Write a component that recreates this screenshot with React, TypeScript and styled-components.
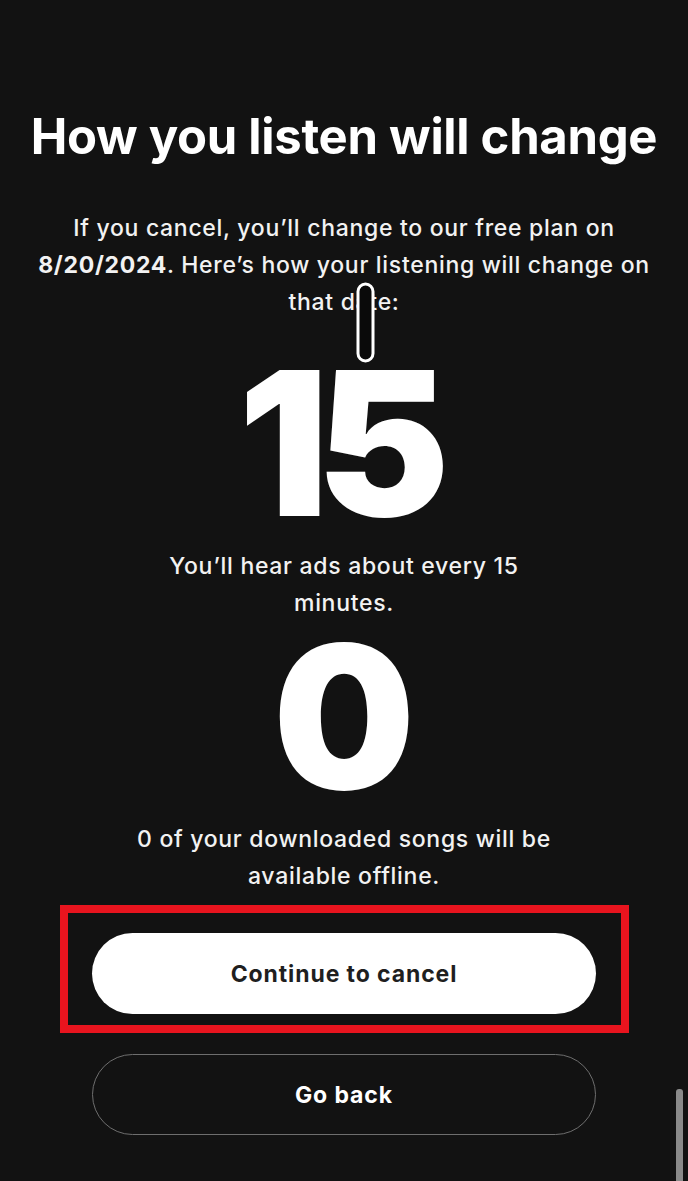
import React from 'react';
import styled, { createGlobalStyle } from 'styled-components';

const GlobalStyle = createGlobalStyle`
  html, body {
    margin: 0;
    padding: 0;
    background: #121212;
  }
  * {
    box-sizing: border-box;
  }
`;

const Screen = styled.div`
  position: relative;
  width: 688px;
  height: 1181px;
  overflow: hidden;
  background: #121212;
  color: #ffffff;
  font-family: 'Inter', 'Noto Sans', sans-serif;
  display: flex;
  flex-direction: column;
  align-items: center;
  padding-top: 108px;
`;

const Title = styled.h1`
  margin: 0;
  font-size: 49px;
  font-weight: 700;
  letter-spacing: -0.3px;
  line-height: 58px;
  text-align: center;
  white-space: nowrap;
`;

const Lead = styled.p`
  margin: 44px 0 0;
  width: 660px;
  font-size: 23px;
  font-weight: 500;
  line-height: 37px;
  letter-spacing: 0.7px;
  text-align: center;
  color: #f2f2f2;

  strong {
    font-weight: 700;
  }
`;

const BigNumber = styled.div<{ $gap: number }>`
  margin-top: ${(p) => p.$gap}px;
  font-size: 200px;
  font-weight: 900;
  line-height: 150px;
  letter-spacing: -12px;
  text-indent: -12px;
`;

const Caption = styled.p`
  margin: 30px 0 0;
  width: 560px;
  font-size: 23px;
  font-weight: 500;
  line-height: 37px;
  letter-spacing: 0.7px;
  text-align: center;
  color: #f2f2f2;
`;

const Highlight = styled.div`
  margin-top: 10px;
  width: 569px;
  height: 128px;
  padding-top: 20px;
  border: 8px solid #e8141e;
  display: flex;
  align-items: flex-start;
  justify-content: center;
`;

const PillButton = styled.button<{ $variant: 'primary' | 'outline' }>`
  width: 504px;
  height: 81px;
  border-radius: 41px;
  font-family: inherit;
  font-size: 23px;
  font-weight: 700;
  letter-spacing: 0.9px;
  cursor: pointer;
  background: ${(p) => (p.$variant === 'primary' ? '#ffffff' : 'transparent')};
  color: ${(p) => (p.$variant === 'primary' ? '#1f1f1f' : '#ffffff')};
  border: ${(p) => (p.$variant === 'primary' ? 'none' : '1.5px solid #6e6e6e')};
`;

const SecondaryRow = styled.div`
  margin-top: 21px;
`;

const TextCursor = styled.svg`
  position: absolute;
  left: 355px;
  top: 282px;
`;

const ScrollThumb = styled.div`
  position: absolute;
  right: 5px;
  bottom: 0;
  width: 7px;
  height: 92px;
  border-radius: 3px 3px 0 0;
  background: #8a8a8a;
`;

export default function App() {
  return (
    <>
      <GlobalStyle />
      <Screen>
        <Title>How you listen will change</Title>
        <Lead>
          If you cancel, you’ll change to our free plan on
          <br />
          <strong>8/20/2024</strong>. Here’s how your listening will change on
          <br />
          that date:
        </Lead>
        <BigNumber $gap={47}>15</BigNumber>
        <Caption>
          You’ll hear ads about every 15
          <br />
          minutes.
        </Caption>
        <BigNumber $gap={19}>0</BigNumber>
        <Caption>
          0 of your downloaded songs will be
          <br />
          available offline.
        </Caption>
        <Highlight>
          <PillButton $variant='primary'>Continue to cancel</PillButton>
        </Highlight>
        <SecondaryRow>
          <PillButton $variant='outline'>Go back</PillButton>
        </SecondaryRow>
        <TextCursor width='22' height='82' viewBox='0 0 22 82'>
          <rect x='3' y='2' width='15' height='77' rx='7.5' fill='#0a0a0a' stroke='#ffffff' strokeWidth='3' />
        </TextCursor>
        <ScrollThumb />
      </Screen>
    </>
  );
}
